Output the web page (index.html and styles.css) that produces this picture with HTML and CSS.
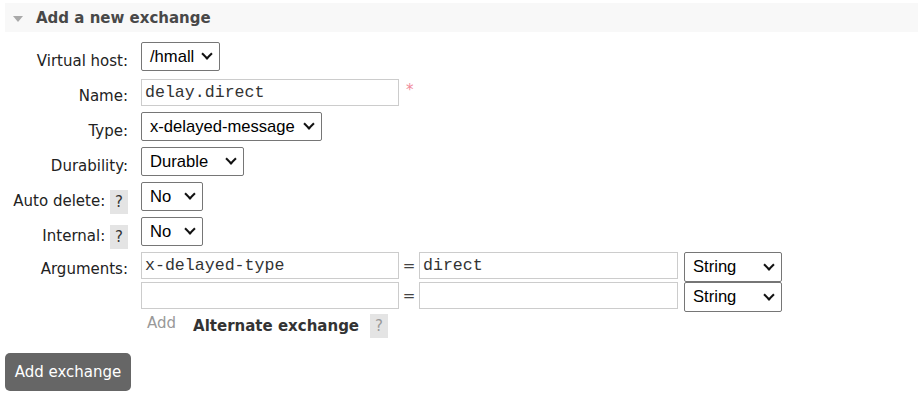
FILE: index.html
```html
<!DOCTYPE html>
<html>
<head>
<meta charset="utf-8">
<link rel="stylesheet" href="styles.css">
</head>
<body>
<div class="section-head">
  <span class="tri"></span>
  <h2 class="title">Add a new exchange</h2>
</div>
<div class="form">
  <div class="lbl">Virtual host:</div>
  <div class="ctl"><div class="sel sel-vhost">/hmall<span class="chev"></span></div></div>

  <div class="lbl">Name:</div>
  <div class="ctl"><div class="inp inp-name">delay.direct</div><span class="req">*</span></div>

  <div class="lbl">Type:</div>
  <div class="ctl"><div class="sel sel-type">x-delayed-message<span class="chev"></span></div></div>

  <div class="lbl">Durability:</div>
  <div class="ctl"><div class="sel sel-dur">Durable<span class="chev"></span></div></div>

  <div class="lbl">Auto delete: <span class="help">?</span></div>
  <div class="ctl"><div class="sel sel-no">No<span class="chev"></span></div></div>

  <div class="lbl">Internal: <span class="help">?</span></div>
  <div class="ctl"><div class="sel sel-no">No<span class="chev"></span></div></div>

  <div class="lbl lbl-args">Arguments:</div>
  <div class="args">
    <div class="arg-row">
      <div class="inp inp-key">x-delayed-type</div>
      <span class="eq">=</span>
      <div class="inp inp-val">direct</div>
      <div class="sel sel-str">String<span class="chev"></span></div>
    </div>
    <div class="arg-row">
      <div class="inp inp-key"></div>
      <span class="eq">=</span>
      <div class="inp inp-val"></div>
      <div class="sel sel-str">String<span class="chev"></span></div>
    </div>
    <div class="arg-links">
      <span class="add-link">Add</span>
      <span class="alt">Alternate exchange</span>
      <span class="help help-light">?</span>
    </div>
  </div>
</div>
<div class="btn-wrap"><span class="btn">Add exchange</span></div>
</body>
</html>
```

FILE: styles.css
```css
html, body {
  margin: 0;
  padding: 0;
  background: #fff;
}
body {
  font-family: "DejaVu Sans", Verdana, sans-serif;
  font-size: 15px;
  color: #222;
}
.section-head {
  margin: 3px 0 0 5px;
  height: 29px;
  background: #f8f8f8;
  display: flex;
  align-items: center;
}
.tri {
  width: 0;
  height: 0;
  margin-left: 8px;
  margin-right: 13px;
  margin-top: 2px;
  border-left: 5.5px solid transparent;
  border-right: 5.5px solid transparent;
  border-top: 6px solid #a9a9a9;
}
.title {
  margin: 0;
  font-size: 15px;
  font-weight: bold;
  color: #484848;
}
.form {
  margin-top: 7px;
  display: grid;
  grid-template-columns: 136px 1fr;
  grid-template-rows: repeat(6, 35px) auto;
}
.lbl {
  display: flex;
  justify-content: flex-end;
  align-items: center;
  padding-top: 9px;
  padding-right: 8px;
  color: #222;
  white-space: pre;
}
.lbl-args {
  align-items: flex-start;
  padding-top: 11px;
}
.ctl {
  display: flex;
  align-items: center;
  padding-left: 5px;
}
.help {
  display: inline-flex;
  justify-content: center;
  align-items: center;
  width: 18px;
  height: 24px;
  margin-top: 2px;
  background: #e4e4e4;
  color: #333;
  font-size: 15px;
}
.help-light {
  color: #999;
}
.sel {
  box-sizing: border-box;
  height: 29px;
  border: 1px solid #767676;
  border-radius: 2px;
  background: #fff;
  display: flex;
  align-items: center;
  justify-content: space-between;
  padding: 0 6px 0 8px;
  font-family: "Liberation Sans", Arial, sans-serif;
  font-size: 16.6px;
  color: #000;
}
.chev {
  width: 6px;
  height: 6px;
  border-right: 2px solid #111;
  border-bottom: 2px solid #111;
  transform: rotate(45deg);
  margin-top: -5px;
  margin-right: 2px;
}
.sel-vhost { width: 79px; }
.sel-type { width: 181px; }
.sel-dur { width: 103px; }
.sel-no { width: 62px; }
.sel-str { width: 98px; height: 30px; margin-left: 6px; }
.inp {
  box-sizing: border-box;
  height: 27px;
  border: 1px solid #ccc;
  background: #fff;
  padding: 0 3px;
  font-family: "Liberation Mono", "Courier New", monospace;
  font-size: 16.6px;
  color: #333;
  display: flex;
  align-items: center;
}
.inp-name { width: 258px; margin-top: 2px; }
.req {
  color: #f08a9a;
  font-size: 15px;
  margin-left: 7px;
  margin-top: -4px;
}
.args {
  grid-column: 2;
  padding-left: 5px;
  padding-top: 3px;
}
.arg-row {
  display: flex;
  align-items: flex-start;
  height: 30px;
}
.inp-key { width: 258px; }
.inp-val { width: 259px; }
.eq {
  width: 20px;
  text-align: center;
  font-size: 15px;
  color: #444;
  padding-top: 5px;
}
.arg-links {
  display: flex;
  align-items: center;
  height: 26px;
  margin-top: 0;
}
.add-link {
  color: #999;
  margin-left: 6px;
  margin-right: 17px;
  margin-top: -4px;
}
.alt {
  font-weight: bold;
  color: #333;
  margin-right: 11px;
  margin-top: 2px;
}
.btn-wrap {
  margin: 15px 0 0 5px;
}
.btn {
  display: inline-flex;
  align-items: center;
  justify-content: center;
  width: 126px;
  height: 38px;
  background: #666;
  border-radius: 5px;
  color: #fff;
  font-size: 15px;
}
```
